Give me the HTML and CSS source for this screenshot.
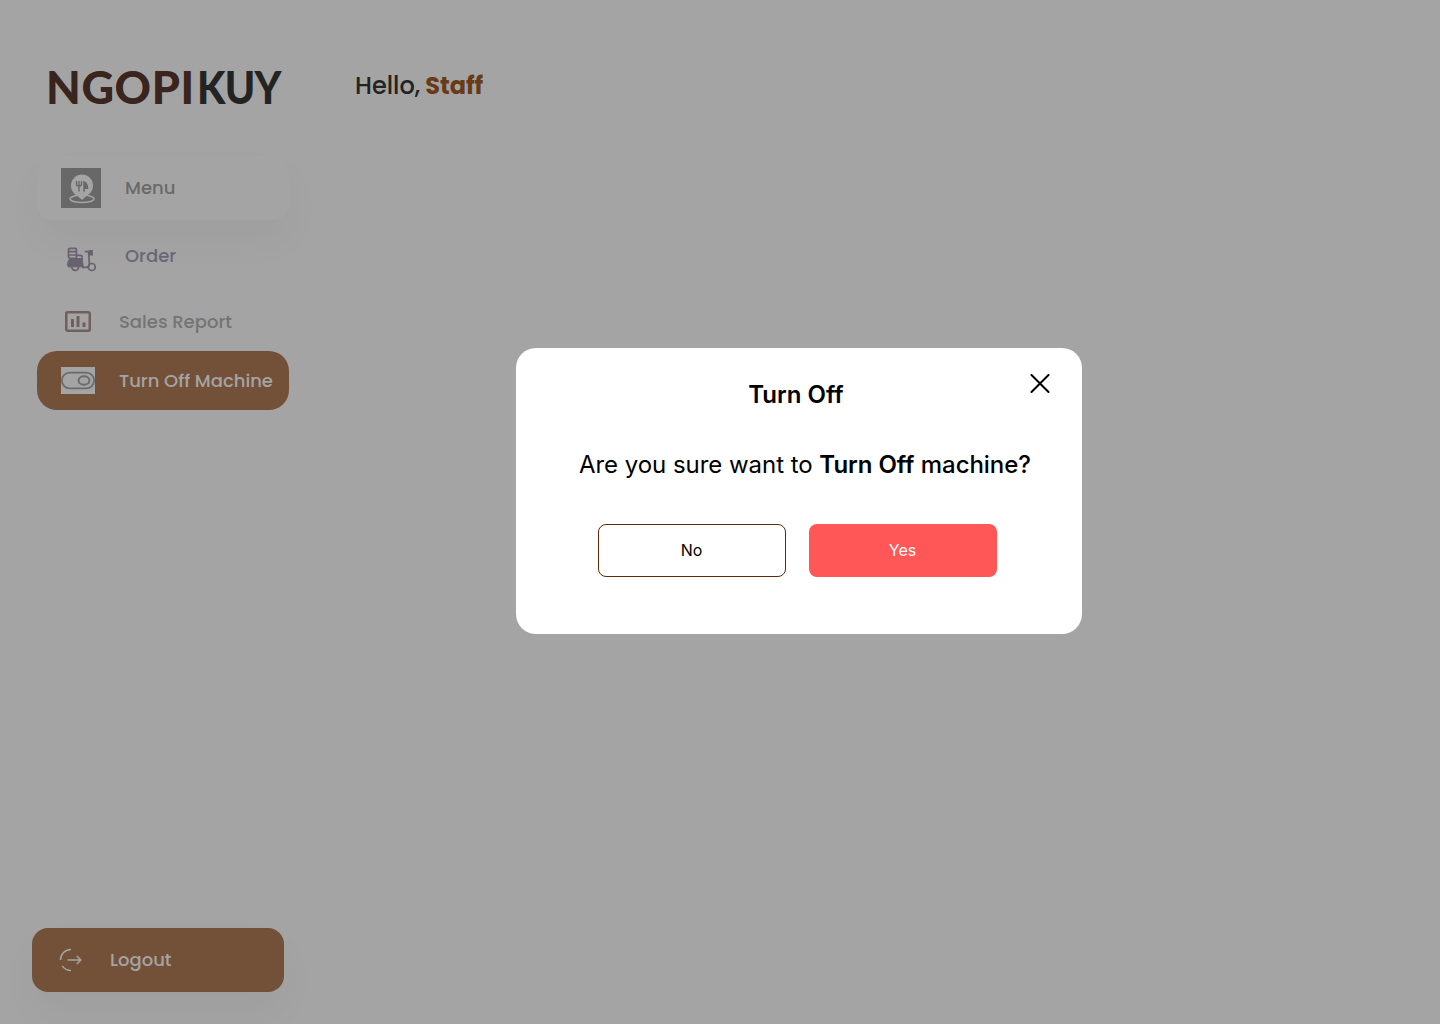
FILE: index.html
```html
<!DOCTYPE html>
<html lang="en">
<head>
<meta charset="utf-8">
<title>Ngopikuy</title>
<link rel="stylesheet" href="styles.css">
</head>
<body>
<div class="page">
  <aside class="sidebar">
    <div class="logo"><span class="logo-main">NGOPI</span><span class="logo-accent">KUY</span></div>
    <nav class="nav">
      <a class="item item-menu">
        <svg class="icon-menu" width="40" height="40" viewBox="0 0 40 40">
          <rect width="40" height="40" fill="#686868"/>
          <ellipse cx="21" cy="30.8" rx="12" ry="3.7" fill="none" stroke="#a4a4a4" stroke-width="1.5"/>
          <path d="M21 6.500a11 11 0 0 1 11 11c0 5.400-3.200 8.500-6.500 10.500L21 32l-4.500-4C13.200 26 10 22.900 10 17.500a11 11 0 0 1 11-11z" fill="#a4a4a4"/>
          <path d="M15.500 13v3.200q0 1.800 2.500 1.800t2.500-1.800V13M18 13v10.500" fill="none" stroke="#686868" stroke-width="1.400"/>
          <path d="M22.300 13c3.500.5 5 4 5 8h-3.500v2.800h-1.500z" fill="#686868"/>
        </svg>
        <span class="t-menu">Menu</span>
      </a>
      <a class="item item-order">
        <svg class="icon-order" width="30" height="25" viewBox="0 0 30 25" fill="none" stroke="#686270" stroke-width="1.700">
          <rect x="1.500" y="1.300" width="8" height="10" rx="1.500"/>
          <path d="M1.500 4.600h8M1.500 8h8"/>
          <path d="M9.500 8.300h4.200q1.300 0 1.300 1.300v3"/>
          <path d="M3.500 11.500h10.300q1.300 0 1.500 1.300l1 7H1.500q-.7 0-.7-.8V16q.5-3.500 2.700-4.500z" fill="#686270" stroke-width="1"/>
          <path d="M4.800 20a3.400 3.400 0 0 0 6.800 0M15 20.300h4.500q2.800 0 2.800-3.300L21.700 4.600h-4"/>
          <path d="M21.500 4.500q1.500-1 3.500-.7v4l-3-.5z" fill="#686270"/>
          <circle cx="24.800" cy="20" r="3.500"/>
        </svg>
        <span class="t-order">Order</span>
      </a>
      <a class="item item-sales">
        <svg class="icon-sales" width="26" height="21" viewBox="0 0 26 21">
          <rect x="1.250" y="1.250" width="23.500" height="18.500" rx="1.500" fill="none" stroke="#705f5f" stroke-width="2.500"/>
          <path d="M6 8h3v8H6zM11.500 5h3v11h-3zM17.500 11.500h3V16h-3z" fill="#705f5f"/>
        </svg>
        <span class="t-sales">Sales Report</span>
      </a>
      <a class="item item-power">
        <svg width="34" height="27" viewBox="0 0 34 27">
          <rect width="34" height="27" fill="#a4a4a4"/>
          <rect x=".9" y="5.700" width="32.200" height="15.600" rx="7.800" fill="none" stroke="#6b6b6b" stroke-width="1.800"/>
          <ellipse cx="23" cy="13.500" rx="5.400" ry="4.200" fill="none" stroke="#6b6b6b" stroke-width="2"/>
        </svg>
        <span class="t-power">Turn Off Machine</span>
      </a>
    </nav>
    <a class="logout">
      <svg width="24" height="24" viewBox="0 0 24 24" fill="none" stroke="#a4a4a4" stroke-width="1.500">
        <path d="M12 1.500A10.500 10.500 0 0 0 1.500 12M3.300 17.800A10.500 10.500 0 0 0 12 22.500M8.500 12h13.300M17.800 8l4 4-4 4"/>
      </svg>
      <span class="t-logout">Logout</span>
    </a>
  </aside>
  <main class="main">
    <h1 class="hello"><span class="greet">Hello,</span><span class="role">Staff</span></h1>
  </main>
  <section class="modal">
    <svg class="close" width="20" height="20" viewBox="0 0 20 20" fill="none" stroke="#000" stroke-width="2" stroke-linecap="round"><path d="M1.500 1l17 17M18.500 1L1.500 18"/></svg>
    <h2 class="title">Turn Off</h2>
    <p class="question"><span>Are you sure want to </span><b>Turn Off</b><span class="machine"> machine?</span></p>
    <div class="actions">
      <button class="btn no">No</button>
      <button class="btn yes">Yes</button>
    </div>
  </section>
</div>
</body>
</html>
```
FILE: styles.css
```css
* { box-sizing: border-box; }
body { margin: 0; }
.page {
  position: relative;
  display: flex;
  width: 1440px;
  height: 1024px;
  overflow: hidden;
  background: #a4a4a4;
  font-family: Poppins, Inter, "Liberation Sans", sans-serif;
}
.sidebar {
  display: flex;
  flex-direction: column;
  width: 320px;
  padding: 60px 0 32px 32px;
}
.logo {
  display: flex;
  height: 54px;
  margin-left: 14px;
  font: 900 45px/54px Lato, sans-serif;
  white-space: nowrap;
}
.logo-main { color: #39251e; letter-spacing: .6px; }
.logo-accent {
  margin-left: 2px;
  color: #232323;
  letter-spacing: -.8px;
  transform: scaleX(.91);
  transform-origin: left;
}
.nav { display: flex; flex-direction: column; margin: 42px 0 0 5px; }
.item {
  display: flex;
  align-items: center;
  width: 252px;
  padding-left: 24px;
  font-size: 18px;
  font-weight: 500;
  line-height: 27px;
  white-space: nowrap;
}
.item-menu {
  height: 64px;
  gap: 24px;
  border-radius: 16px;
  background: #a4a4a4;
  box-shadow: 0 20px 40px rgba(0, 0, 0, .035);
  color: #696969;
}
.item-order { height: 72px; padding-left: 30px; gap: 28px; color: #6b6675; }
.icon-order { margin-top: 6px; }
.item-sales { height: 59px; padding-left: 28px; gap: 28px; color: #747474; }
.item-power {
  height: 59px;
  gap: 24px;
  border-radius: 20px;
  background: #735138;
  color: #a4a4a4;
}
.t-menu, .t-order, .t-logout { margin-bottom: 2px; }
.logout {
  display: flex;
  align-items: center;
  width: 252px;
  height: 64px;
  margin-top: auto;
  padding-left: 27px;
  gap: 27px;
  border-radius: 16px;
  background: #735138;
  box-shadow: 0 20px 40px rgba(0, 0, 0, .035);
  color: #a4a4a4;
  font-size: 18px;
  font-weight: 500;
}
.main { padding: 67px 0 0 35px; }
.hello {
  display: flex;
  gap: 5px;
  margin: 0;
  font-size: 24px;
  line-height: 38px;
  white-space: nowrap;
}
.greet { color: #232323; font-weight: 500; }
.role { color: #683b18; font-weight: 700; }
.modal {
  position: absolute;
  left: 516px;
  top: 348px;
  width: 566px;
  height: 286px;
  padding-top: 32px;
  border-radius: 20px;
  background: #fff;
  color: #000;
  font-family: Inter, sans-serif;
}
.close { position: absolute; right: 32.500px; top: 26px; }
.title {
  margin: 0 6px 0 0;
  text-align: center;
  font-size: 24px;
  font-weight: 600;
  line-height: 29px;
}
.question {
  margin: 41px 0 0 63px;
  font-size: 24px;
  line-height: 29px;
  letter-spacing: -.04px;
  white-space: nowrap;
}
.question b { font-weight: 600; }
.machine { font-weight: 500; }
.actions { display: flex; gap: 23px; margin: 45px 0 0 82px; }
.btn {
  width: 188px;
  height: 53px;
  padding: 0 1px 2px 0;
  border: 0;
  border-radius: 8px;
  font: 400 16px/20px Inter, sans-serif;
}
.no { border: 1px solid #5c2b0b; background: #fff; color: #000; }
.yes { background: #ff5757; color: #fff; }
```
